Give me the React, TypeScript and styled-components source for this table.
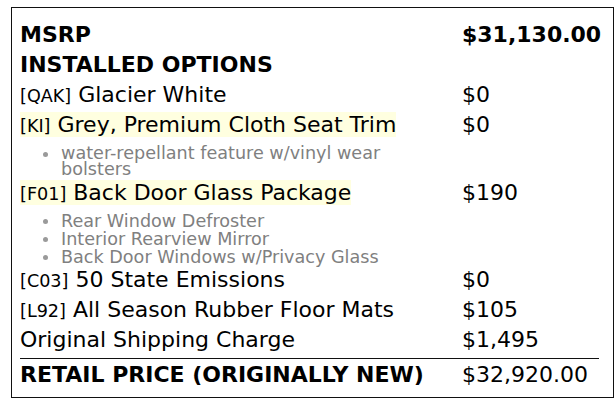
import React from "react";
import styled, { createGlobalStyle } from "styled-components";

const GlobalStyle = createGlobalStyle`
  html, body {
    margin: 0;
    padding: 0;
    background: #ffffff;
  }
  body {
    font-family: "DejaVu Sans", "Liberation Sans", sans-serif;
    color: #000000;
  }
`;

const Card = styled.div`
  box-sizing: border-box;
  width: 603px;
  margin: 7px 0 0 11px;
  border: 1px solid #111111;
  padding: 12px 14px 7px 8px;
  font-size: 22px;
  line-height: 26px;
`;

const Row = styled.div<{ $bold?: boolean; $withList?: boolean; $total?: boolean }>`
  display: grid;
  grid-template-columns: 442px 1fr;
  align-items: start;
  padding: ${(p) => (p.$total ? "3px 0 2px" : p.$withList ? "2px 0 0.5px" : "2px 0")};
  margin-top: ${(p) => (p.$total ? "3px" : "0")};
  border-top: ${(p) => (p.$total ? "1px solid #111111" : "none")};
  font-weight: ${(p) => (p.$bold ? "bold" : "normal")};
`;

const NameCell = styled.div`
  padding-right: 8px;
  min-width: 0;
`;

const PriceCell = styled.div<{ $bold?: boolean }>`
  font-weight: ${(p) => (p.$bold ? "bold" : "normal")};
  white-space: nowrap;
`;

const Highlight = styled.span<{ $on?: boolean }>`
  background: ${(p) => (p.$on ? "#ffffe0" : "transparent")};
`;

const Code = styled.span`
  font-size: 17.6px;
  line-height: 1;
`;

const SubList = styled.ul`
  margin: 7px 0 0;
  padding-left: 41px;
  color: #808080;
  font-size: 17.6px;
  line-height: 16px;
  list-style: none;
`;

const SubItem = styled.li`
  position: relative;

  & + & {
    margin-top: 2px;
  }

  &::before {
    content: "";
    position: absolute;
    left: -18.5px;
    top: 6.5px;
    width: 5px;
    height: 5px;
    border-radius: 50%;
    background: #9a9a9a;
  }
`;

type Option = {
  code: string;
  name: string;
  price: string;
  highlight?: boolean;
  details?: string[];
};

const options: Option[] = [
  { code: "QAK", name: "Glacier White", price: "$0" },
  {
    code: "KI",
    name: "Grey, Premium Cloth Seat Trim",
    price: "$0",
    highlight: true,
    details: ["water-repellant feature w/vinyl wear bolsters"],
  },
  {
    code: "F01",
    name: "Back Door Glass Package",
    price: "$190",
    highlight: true,
    details: ["Rear Window Defroster", "Interior Rearview Mirror", "Back Door Windows w/Privacy Glass"],
  },
  { code: "C03", name: "50 State Emissions", price: "$0" },
  { code: "L92", name: "All Season Rubber Floor Mats", price: "$105" },
];

export default function App() {
  return (
    <>
      <GlobalStyle />
      <Card>
        <Row $bold>
          <NameCell>MSRP</NameCell>
          <PriceCell $bold>$31,130.00</PriceCell>
        </Row>
        <Row $bold>
          <NameCell>INSTALLED OPTIONS</NameCell>
          <PriceCell />
        </Row>
        {options.map((o) => (
          <Row key={o.code} $withList={!!o.details}>
            <NameCell>
              <Highlight $on={o.highlight}>
                <Code>[{o.code}]</Code> {o.name}
              </Highlight>
              {o.details && (
                <SubList>
                  {o.details.map((d) => (
                    <SubItem key={d}>{d}</SubItem>
                  ))}
                </SubList>
              )}
            </NameCell>
            <PriceCell>{o.price}</PriceCell>
          </Row>
        ))}
        <Row>
          <NameCell>Original Shipping Charge</NameCell>
          <PriceCell>$1,495</PriceCell>
        </Row>
        <Row $bold $total>
          <NameCell>RETAIL PRICE (ORIGINALLY NEW)</NameCell>
          <PriceCell>$32,920.00</PriceCell>
        </Row>
      </Card>
    </>
  );
}
